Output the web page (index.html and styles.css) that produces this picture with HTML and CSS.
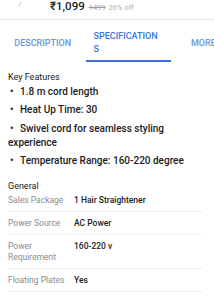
FILE: index.html
```html
<!DOCTYPE html>
<html>
<head>
<meta charset="utf-8">
<link rel="stylesheet" href="styles.css">
</head>
<body>
<div class="price-bar">
  <svg class="mark" width="5" height="7" viewBox="0 0 5 7"><path d="M4 1 L1.5 6" stroke="#c8c8c8" stroke-width="1" fill="none"/></svg>
  <span class="price">₹1,099</span>
  <span class="mrp">1499</span>
  <span class="off">26% off</span>
</div>
<div class="tabs">
  <div class="tab"><span>DESCRIPTION</span></div>
  <div class="tab active"><span>SPECIFICATIONS</span></div>
  <div class="tab more"><span>MORE</span></div>
</div>
<div class="content">
  <div class="heading">Key Features</div>
  <ul class="features">
    <li>1.8 m cord length</li>
    <li>Heat Up Time: 30</li>
    <li>Swivel cord for seamless styling experience</li>
    <li>Temperature Range: 160-220 degree</li>
  </ul>
  <div class="heading general">General</div>
  <div class="specs">
    <div class="row first"><div class="label">Sales Package</div><div class="value">1 Hair Straightener</div></div>
    <div class="row"><div class="label">Power Source</div><div class="value">AC Power</div></div>
    <div class="row"><div class="label">Power Requirement</div><div class="value">160-220 v</div></div>
    <div class="row"><div class="label">Floating Plates</div><div class="value">Yes</div></div>
  </div>
</div>
</body>
</html>
```
FILE: styles.css
```css
html, body {
  margin: 0;
  padding: 0;
  background: #ffffff;
  font-family: Roboto, "Noto Sans", sans-serif;
  color: #212121;
  overflow: hidden;
}
.price-bar {
  height: 20px;
  box-sizing: border-box;
  border-bottom: 1px solid #e6e6e6;
  display: flex;
  align-items: baseline;
  padding-left: 17px;
  white-space: nowrap;
}
.mark {
  align-self: flex-start;
  margin-top: 1px;
  margin-right: 28px;
}
.price {
  font-size: 11.5px;
  line-height: 13px;
  font-weight: 500;
  color: #212121;
}
.mrp {
  font-size: 7.5px;
  color: #9e9e9e;
  text-decoration: line-through;
  margin-left: 4px;
}
.off {
  font-size: 7.5px;
  color: #b0b0b0;
  margin-left: 3px;
}
.tabs {
  display: flex;
  height: 42px;
  overflow: hidden;
  width: 214px;
}
.tab {
  flex: 0 0 85.5px;
  box-sizing: border-box;
  padding: 6px 8px 0;
  display: flex;
  align-items: center;
  justify-content: center;
  font-size: 9px;
  line-height: 13px;
  font-weight: 500;
  color: #6d96da;
  overflow-wrap: anywhere;
  border-bottom: 2px solid transparent;
}
.tab.active {
  color: #3a77d8;
  border-bottom-color: #3d72d2;
}
.tab.more {
  justify-content: flex-start;
  padding-left: 20px;
}
.content {
  padding: 9px 11px 0 8px;
}
.heading {
  font-size: 9px;
  line-height: 12px;
  color: #212121;
}
.features {
  list-style: none;
  margin: 1.5px 0 0;
  padding: 0;
}
.features li {
  font-size: 10px;
  line-height: 14px;
  font-weight: 500;
  color: #212121;
  margin-bottom: 4.5px;
}
.features li::before {
  content: "\2022";
  display: inline-block;
  width: 10px;
  padding-left: 2px;
}
.general {
  margin-top: 11.5px;
}
.specs {
  font-size: 8.5px;
  line-height: 11px;
}
.row {
  display: flex;
  padding: 5.5px 0;
  border-bottom: 1px solid #f0f0f0;
}
.row.first {
  padding-top: 3px;
}
.label {
  flex: 0 0 60px;
  margin-right: 6px;
  color: #8c8c8c;
}
.value {
  flex: 1;
  font-weight: 500;
  color: #212121;
}
```
